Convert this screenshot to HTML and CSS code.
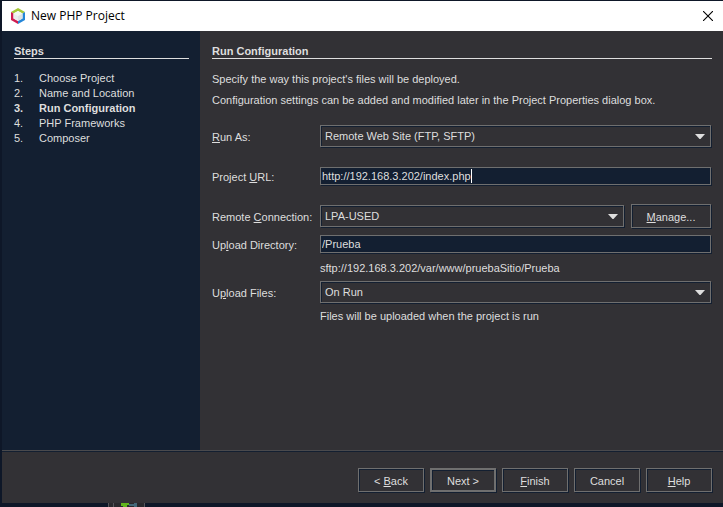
FILE: index.html
```html
<!DOCTYPE html>
<html lang="en">
<head>
<meta charset="utf-8">
<title>New PHP Project</title>
<link rel="stylesheet" href="styles.css">
</head>
<body>
<main class="dialog">
  <header class="titlebar">
    <svg class="logo" viewBox="0 0 14 16" aria-hidden="true">
      <path d="M7 0 14 4 11.5 5.5 7 3 2.500 5.500 0 4Z" fill="#a4c837"/>
      <path d="M0 4 2.500 5.500V10.500L7 13V16L0 12Z" fill="#d01c50"/>
      <path d="M14 4V12L7 16V13L11.500 10.500V5.500Z" fill="#2486d8"/>
      <path d="M7 3 11.500 5.500 7 8 2.500 5.500Z" fill="#f4f8f2"/>
      <path d="M2.500 5.500 7 8V13L2.500 10.500Z" fill="#e9edee"/>
      <path d="M11.500 5.500V10.500L7 13V8Z" fill="#dde3e3"/>
    </svg>
    <h1 class="title">New PHP Project</h1>
    <button class="close" type="button" aria-label="Close">
      <svg viewBox="0 0 10 10" width="10" height="10"><path d="M0 0 10 10M10 0 0 10" stroke="#000" stroke-width="1.1"/></svg>
    </button>
  </header>
  <div class="body">
    <nav class="steps">
      <h2 class="heading">Steps</h2>
      <ol class="step-list">
        <li><span>1.</span>Choose Project</li>
        <li><span>2.</span>Name and Location</li>
        <li class="current"><span>3.</span>Run Configuration</li>
        <li><span>4.</span>PHP Frameworks</li>
        <li><span>5.</span>Composer</li>
      </ol>
    </nav>
    <section class="content">
      <h2 class="heading">Run Configuration</h2>
      <div class="intro">
        <p>Specify the way this project's files will be deployed.</p>
        <p>Configuration settings can be added and modified later in the Project Properties dialog box.</p>
      </div>
      <form class="form">
        <div class="row spaced">
          <label for="run-as"><u>R</u>un As:</label>
          <div class="combo">
            <select id="run-as"><option>Remote Web Site (FTP, SFTP)</option></select>
            <svg class="arrow" viewBox="0 0 10 5"><path d="M0 0H10L5.500 5H4.500Z"/></svg>
          </div>
        </div>
        <div class="row spaced">
          <label for="url">Project <u>U</u>RL:</label>
          <div class="field"><input id="url" type="text" value="http://192.168.3.202/index.php"><span class="caret"></span></div>
        </div>
        <div class="row">
          <label for="connection">Remote <u>C</u>onnection:</label>
          <div class="combo">
            <select id="connection"><option>LPA-USED</option></select>
            <svg class="arrow" viewBox="0 0 10 5"><path d="M0 0H10L5.500 5H4.500Z"/></svg>
          </div>
          <button class="button manage" type="button"><u>M</u>anage...</button>
        </div>
        <div class="row">
          <label for="directory">Up<u>l</u>oad Directory:</label>
          <div class="field"><input id="directory" type="text" value="/Prueba"></div>
        </div>
        <p class="hint">sftp://192.168.3.202/var/www/pruebaSitio/Prueba</p>
        <div class="row">
          <label for="files">U<u>p</u>load Files:</label>
          <div class="combo">
            <select id="files"><option>On Run</option></select>
            <svg class="arrow" viewBox="0 0 10 5"><path d="M0 0H10L5.500 5H4.500Z"/></svg>
          </div>
        </div>
        <p class="hint">Files will be uploaded when the project is run</p>
      </form>
    </section>
  </div>
  <footer class="actions">
    <button class="button" type="button">&lt; <u>B</u>ack</button>
    <button class="button default" type="button">Next &gt;</button>
    <button class="button" type="button"><u>F</u>inish</button>
    <button class="button" type="button">Cancel</button>
    <button class="button" type="button"><u>H</u>elp</button>
  </footer>
</main>
<svg class="tab" viewBox="0 0 38 4" aria-hidden="true">
  <path d="M0 0H37V4H0Z" fill="#29292d"/>
  <path d="M0 0H1V4H0ZM5 0H6V4H5ZM36 0H37V4H36Z" fill="#55555a"/>
  <path d="M13 0H21V2H19V4H15V3H13Z" fill="#62b51c"/>
  <path d="M21 1H26V0H29V4H26V3H21Z" fill="#426879"/>
</svg>
</body>
</html>
```
FILE: styles.css
```css
* { box-sizing: border-box; }

body {
  margin: 0;
  min-height: 100vh;
  padding: 1px 0 0 2px;
  display: flex;
  flex-direction: column;
  background: #0e1728;
  color: #dedede;
  font: 11px/15px "Liberation Sans", Arial, sans-serif;
}

h1, h2, p, ol { margin: 0; padding: 0; }

.dialog {
  flex: 1;
  display: flex;
  flex-direction: column;
  background: #323135;
}

.titlebar {
  display: flex;
  align-items: center;
  height: 30px;
  padding: 0 10px 0 9px;
  background: #fff;
  color: #000;
}
.logo { width: 14px; height: 16px; margin-right: 6px; }
.title { flex: 1; font: 12px/16px "Open Sans", "Noto Sans", sans-serif; }
.close { display: flex; padding: 0; border: 0; background: none; }

.body { flex: 1; display: flex; }

.steps {
  width: 198px;
  padding: 13px 11px 0 12px;
  background: #131f31;
}
.heading {
  height: 15px;
  border-bottom: 1px solid #dedede;
  font-size: 11px;
  line-height: 14px;
}
.step-list { margin-top: 12px; list-style: none; }
.step-list li { display: flex; }
.step-list span { width: 25px; }
.current { font-weight: bold; }

.content { flex: 1; padding: 13px 11px 0 12px; }
.intro { display: grid; gap: 6px; padding: 13px 0 14px; }

.row { display: flex; align-items: center; min-height: 28px; }
.row label { width: 108px; padding-top: 2px; }
.spaced { margin-bottom: 12px; }
.hint { margin-left: 108px; line-height: 20px; }

.combo, .field, .button {
  border: 1px solid #6f6f6f;
  box-shadow: inset 1px 1px #131f31, 1px 1px #131f31;
}
.combo { position: relative; flex: 1; height: 22px; margin-right: 1px; }
.field {
  flex: 1;
  display: flex;
  align-items: center;
  height: 18px;
  margin-right: 1px;
  background: #131f31;
}

select, input {
  appearance: none;
  border: 0;
  padding: 0;
  background: none;
  color: inherit;
  font: inherit;
  outline: 0;
}
select { display: block; width: 100%; height: 100%; padding: 0 24px 0 4px; }
input { field-sizing: content; padding-left: 1px; }
option { background: #323135; }
.caret { width: 1px; height: 14px; background: #fff; }
.arrow {
  position: absolute;
  right: 5px;
  top: 8px;
  width: 10px;
  height: 5px;
  fill: #dedede;
  pointer-events: none;
}

.button {
  width: 66px;
  height: 24px;
  padding: 2px 0 0;
  background: #323135;
  color: inherit;
  font: inherit;
}
.manage { width: 80px; margin: 0 1px 0 6px; }
.default { border-width: 2px; }

.actions {
  display: flex;
  justify-content: flex-end;
  gap: 6px;
  padding: 17px 11px 11px;
  border-top: 1px solid #4a4a4d;
  box-shadow: inset 0 1px #131f31;
}

.tab { width: 38px; height: 4px; margin-left: 106px; }
```
